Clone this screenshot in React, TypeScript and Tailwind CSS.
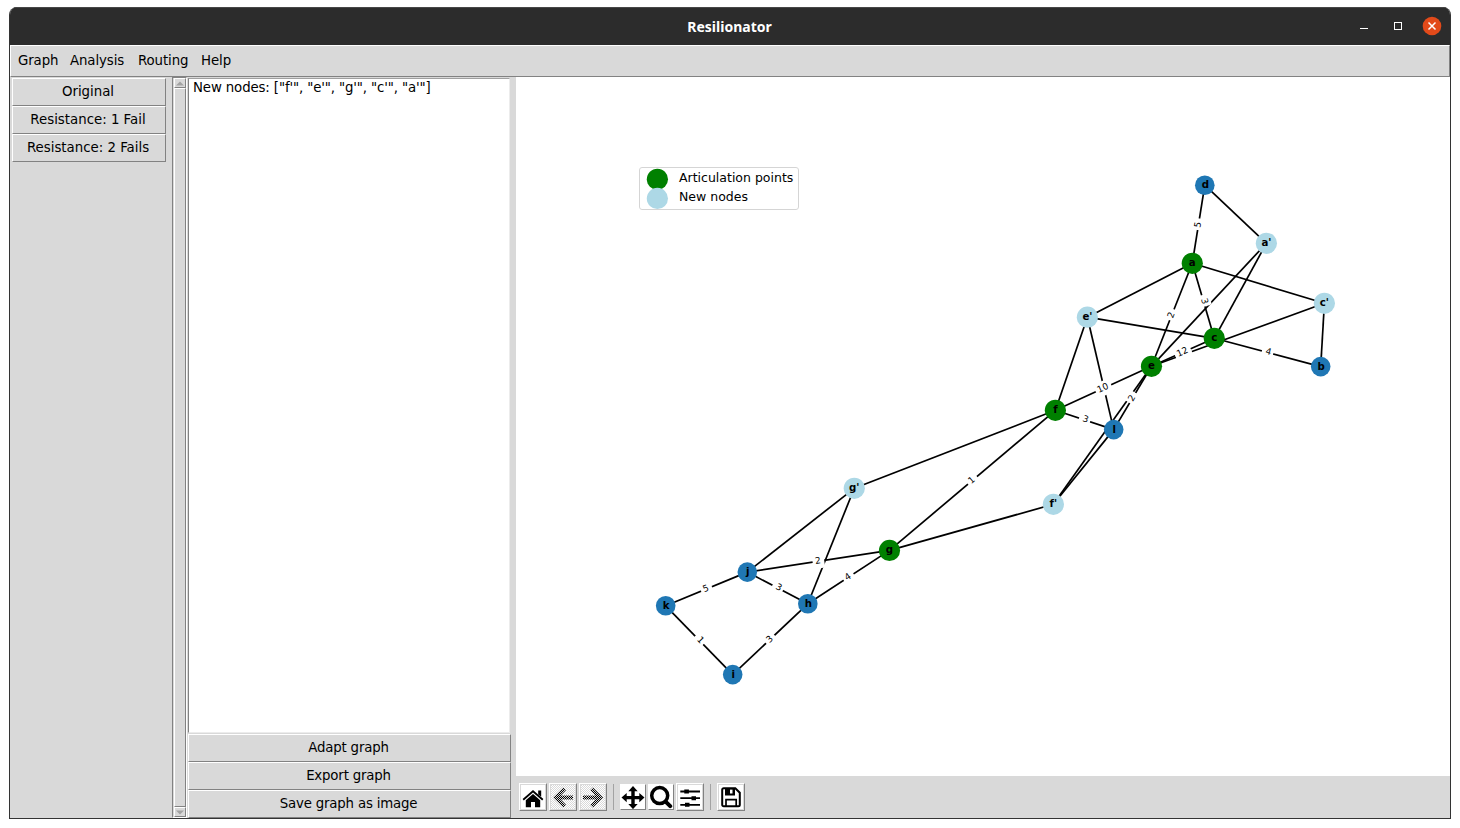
import React from 'react';

type Kind = 'plain' | 'cut' | 'fresh';

const NODES: Record<string, [number, number, Kind]> = {
  d: [1204.8, 185.2, 'plain'],
  a: [1192.3, 263.3, 'cut'],
  "a'": [1266.4, 243.3, 'fresh'],
  "e'": [1087.4, 317.2, 'fresh'],
  "c'": [1324.4, 303.3, 'fresh'],
  c: [1214.3, 338.3, 'cut'],
  e: [1151.5, 366.3, 'cut'],
  b: [1320.7, 366.6, 'plain'],
  f: [1055.4, 410.3, 'cut'],
  l: [1113.7, 429.6, 'plain'],
  "f'": [1053.4, 504.3, 'fresh'],
  "g'": [854.3, 488.3, 'fresh'],
  g: [889.5, 550.4, 'cut'],
  j: [747.3, 572.1, 'plain'],
  h: [807.8, 603.8, 'plain'],
  k: [665.7, 605.8, 'plain'],
  i: [732.7, 674.6, 'plain'],
};

const EDGES: [string, string, string?][] = [
  ['d', 'a', '5'], ['d', "a'"], ["a'", 'e'], ["a'", 'c'], ['a', "e'"], ['a', 'e', '2'],
  ['a', 'c', '3'], ['a', "c'"], ["c'", 'e'], ["c'", 'b'], ['c', 'b', '4'], ['c', 'e', '12'],
  ["e'", 'c'], ["e'", 'f'], ["e'", 'l'], ['e', 'f', '10'], ['e', 'l', '2'], ['e', "f'"],
  ['f', 'l', '3'], ['l', "f'"], ['f', 'g', '1'], ['f', "g'"], ["f'", 'g'], ["g'", 'j'],
  ["g'", 'h'], ['j', 'g', '2'], ['g', 'h', '4'], ['j', 'h', '3'], ['j', 'k', '5'],
  ['k', 'i', '1'], ['i', 'h', '3'],
];

const FILL: Record<Kind, string> = { plain: '#1f77b4', cut: '#008000', fresh: '#add8e6' };

function EdgeLabel({ from, to, text }: { from: string; to: string; text: string }) {
  const [x1, y1] = NODES[from];
  const [x2, y2] = NODES[to];
  let angle = (Math.atan2(y2 - y1, x2 - x1) * 180) / Math.PI;
  if (angle > 90) angle -= 180;
  if (angle < -90) angle += 180;
  const w = text.length * 5.3 + 6.4;
  return (
    <g transform={`translate(${(x1 + x2) / 2} ${(y1 + y2) / 2}) rotate(${angle})`}>
      <rect x={-w / 2} y={-7.2} width={w} height={14.4} rx={2} fill="#fff" />
      <text x={0} y={2.6} fontSize={9} textAnchor="middle" fill="#000" transform={angle > 0 ? 'translate(0.8 -0.8)' : 'translate(-0.5 -0.3)'}>{text}</text>
    </g>
  );
}

function Graph() {
  return (
    <svg width="934" height="699" viewBox="516 77 934 699" className="block font-['DejaVu_Sans',sans-serif]">
      {EDGES.map(([s, t], n) => (
        <line key={n} x1={NODES[s][0]} y1={NODES[s][1]} x2={NODES[t][0]} y2={NODES[t][1]} stroke="#000" strokeWidth="1.7" />
      ))}
      {EDGES.map(([s, t, w], n) => (w ? <EdgeLabel key={n} from={s} to={t} text={w} /> : null))}
      {Object.entries(NODES).map(([name, [x, y, kind]]) => (
        <g key={name}>
          <circle cx={x} cy={y} r={kind === 'plain' ? 9.8 : 10.6} fill={FILL[kind]} />
          <text x={kind === 'plain' ? x + 0.5 : x} y={y + 2.9} fontSize="10.2" fontWeight="bold" textAnchor="middle" fill="#000">{name}</text>
        </g>
      ))}
      <rect x="639.5" y="167.5" width="159" height="42" rx="2.5" fill="#fff" stroke="#d5d5d5" />
      <circle cx="657.4" cy="179.3" r="10.6" fill="#008000" />
      <circle cx="657.4" cy="198.4" r="10.6" fill="#add8e6" />
      <text x="679" y="182" fontSize="12.5">Articulation points</text>
      <text x="679" y="201" fontSize="12.5">New nodes</text>
    </svg>
  );
}

function TkButton({ children }: { children: React.ReactNode }) {
  return (
    <button className="flex h-7 w-full shrink-0 items-center justify-center border border-t-white border-l-white border-r-[#828282] border-b-[#828282] bg-[#d9d9d9] pr-0.5 pb-px">
      {children}
    </button>
  );
}

function Tool({ children, label, size = 'h-7 w-7 p-px' }: { children: React.ReactNode; label: string; size?: string }) {
  return (
    <button aria-label={label} className={`${size} shrink-0 border border-t-white border-l-white border-r-[#828282] border-b-[#828282] bg-[#d9d9d9]`}>
      <svg viewBox="0 0 24 24" className="block h-6 w-6 bg-white">{children}</svg>
    </button>
  );
}

function Stipple() {
  return (
    <defs>
      <pattern id="dots" width="2" height="2" patternUnits="userSpaceOnUse">
        <rect width="1" height="1" fill="#d9d9d9" />
        <rect x="1" y="1" width="1" height="1" fill="#d9d9d9" />
      </pattern>
    </defs>
  );
}

function Toolbar() {
  return (
    <div className="flex h-[42px] shrink-0 items-start pl-[3px] pt-[7px]">
      <Tool label="Home">
        <path d="M1.600 14 12 5l10.400 9-1.200 1.400L12 7.600l-9.200 7.800z" />
        <path d="M17.200 5.500h3v6.300l-3-2.400z" />
        <path d="M4.800 15.200l7.200-6.200 7.200 6.200v7H14v-5.200h-4v5.200H4.800z" />
      </Tool>
      <div className="w-[2px]" />
      <Tool label="Back">
        <Stipple />
        <path d="M13.500 3.800 4.800 12.500 13.500 21.200M5.500 12.500H22" fill="none" stroke="#000" strokeWidth="4" />
        <rect width="24" height="24" fill="url(#dots)" shapeRendering="crispEdges" />
      </Tool>
      <div className="w-[2px]" />
      <Tool label="Forward">
        <path d="M10.500 3.800 19.200 12.500 10.500 21.200M2 12.500H18.500" fill="none" stroke="#000" strokeWidth="4" />
        <rect width="24" height="24" fill="url(#dots)" shapeRendering="crispEdges" />
      </Tool>
      <div className="ml-[6px] mr-[6px] mt-px h-[26px] w-px bg-[#a3a3a3]" />
      <Tool label="Pan" size="mt-px h-[26px] w-[26px]">
        <path transform="translate(0 .6)" d="M12 .5l4.700 5.200h-3v4.600h4.600v-3L23.500 12l-5.200 4.700v-3h-4.600v4.600h3L12 23.500l-4.700-5.200h3v-4.600H5.700v3L.5 12l5.200-4.700v3h4.600V5.700h-3z" />
      </Tool>
      <div className="w-[2px]" />
      <Tool label="Zoom" size="mt-px h-[26px] w-[26px]">
        <circle cx="10.700" cy="10.600" r="8" fill="none" stroke="#000" strokeWidth="3.500" />
        <path d="M16.600 16.600l4.600 4.600" stroke="#000" strokeWidth="4" strokeLinecap="round" />
      </Tool>
      <div className="w-[2px]" />
      <Tool label="Configure subplots">
        <path d="M2.300 6.500h19.700M2.300 13.200h19.700M2.300 19.800h19.700" stroke="#000" strokeWidth="1.800" />
        <path d="M6.300 4.500h4.600v4H6.300zM13.500 11.200h4.500v4h-4.500zM7 17.800h4.500v4H7z" />
      </Tool>
      <div className="ml-[6px] mr-[6px] mt-px h-[26px] w-px bg-[#a3a3a3]" />
      <Tool label="Save">
        <path d="M3.200 4.700a1.500 1.500 0 0 1 1.500-1.500h11.600l4.500 4.500v12a1.500 1.500 0 0 1-1.500 1.500H4.700A1.500 1.500 0 0 1 3.200 19.700z" fill="none" stroke="#000" strokeWidth="2" />
        <path d="M6 3h10v7.500H6zm5 1.500v4h2.500v-4z" fillRule="evenodd" />
        <path d="M7 21v-6.300h10.200V21" fill="none" stroke="#000" strokeWidth="1.700" />
      </Tool>
    </div>
  );
}

function ScrollArrow({ down = false }: { down?: boolean }) {
  return (
    <div className="flex h-[10px] w-3 shrink-0 items-center justify-center border border-t-white border-l-white border-r-[#828282] border-b-[#828282]">
      <svg width="8" height="5" viewBox="0 0 8 5" className="block"><path d={down ? 'M0 .5h8L4 4.500z' : 'M0 4.500h8L4 .5z'} fill="#a3a3a3" /></svg>
    </div>
  );
}

export default function App() {
  return (
    <div className="h-[828px] w-[1460px] overflow-hidden bg-white pl-[9px] pt-[7px] font-['DejaVu_Sans',sans-serif] text-[13.33px] leading-4 text-black">
      <div className="flex h-[812px] w-[1442px] flex-col overflow-hidden rounded-t-lg border border-t-0 border-[#333] bg-[#d9d9d9]">
        <header className="flex h-[38px] shrink-0 items-center border-t border-[#474747] bg-[#2c2c2c] text-white">
          <div className="w-[106px]" />
          <h1 className="flex-1 pr-px text-center font-['Noto_Sans',sans-serif] text-[14px] font-bold">Resilionator</h1>
          <div className="flex w-[106px] items-center">
            <svg width="106" height="37" viewBox="1344 8 106 37">
              <path d="M1360 28.500h8" stroke="#fff" />
              <rect x="1394.500" y="22.500" width="7" height="7" fill="none" stroke="#fff" />
              <circle cx="1432" cy="26" r="9.300" fill="#e24a1a" />
              <path d="M1428.500 22.500l7 7m0-7l-7 7" stroke="#fff" strokeWidth="1.500" />
            </svg>
          </div>
        </header>
        <nav className="flex h-8 shrink-0 items-center gap-[13px] border border-t-white border-l-white border-r-[#828282] border-b-[#828282] pb-px pl-[7px] tracking-[-0.1px]">
          <span className="w-[39px]">Graph</span>
          <span className="w-[55px]">Analysis</span>
          <span className="w-[50px]">Routing</span>
          <span>Help</span>
        </nav>
        <main className="flex min-h-0 flex-1">
          <aside className="w-[162px] shrink-0 pl-[2px] pr-[6px] pt-px">
            <TkButton>Original</TkButton>
            <TkButton>Resistance: 1 Fail</TkButton>
            <TkButton>Resistance: 2 Fails</TkButton>
          </aside>
          <div className="flex w-[15px] shrink-0 flex-col border border-t-[#828282] border-l-[#828282] border-r-white border-b-white bg-[#d9d9d9] pl-px">
            <ScrollArrow />
            <div className="w-3 flex-1 border border-t-white border-l-white border-r-[#828282] border-b-[#828282]" />
            <ScrollArrow down />
          </div>
          <section className="flex w-[325px] shrink-0 flex-col pl-px pr-px tracking-[-0.18px]">
            <div className="mb-px mr-px mt-px flex-1 border border-t-[#a0a0a0] border-l-[#828282] border-r-[#ececec] border-b-[#ececec] bg-white pl-1 pt-px tracking-[-0.13px]">New nodes: ["f'", "e'", "g'", "c'", "a'"]</div>
            <TkButton>Adapt graph</TkButton>
            <TkButton>Export graph</TkButton>
            <TkButton>Save graph as image</TkButton>
          </section>
          <section className="ml-1 flex w-[934px] shrink-0 flex-col">
            <div className="h-[699px] bg-white"><Graph /></div>
            <Toolbar />
          </section>
        </main>
      </div>
    </div>
  );
}
